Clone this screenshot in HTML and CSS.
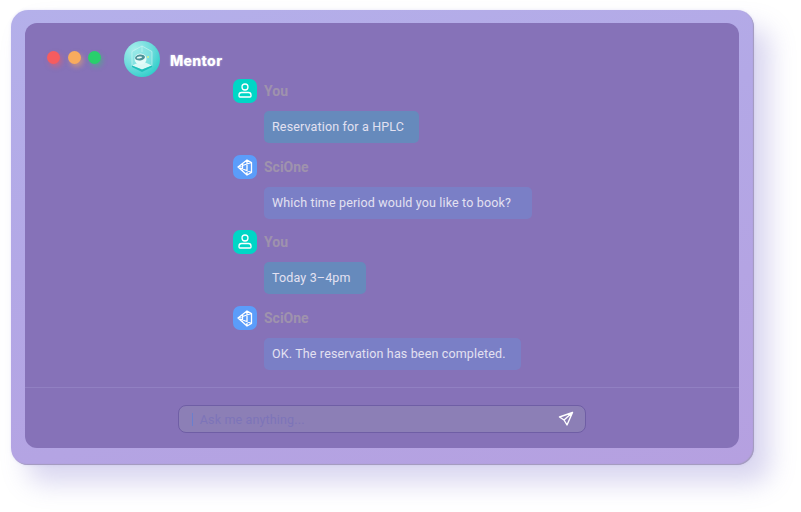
FILE: index.html
```html
<!DOCTYPE html>
<html lang="en">
<head>
  <meta charset="UTF-8">
  <meta name="viewport" content="width=device-width, initial-scale=1.0">
  <title>Mentor</title>
  <link rel="stylesheet" href="styles.css">
</head>
<body>
  <div class="frame">
    <main class="window">
      <header class="top">
        <div class="dots">
          <span class="dot red"></span>
          <span class="dot orange"></span>
          <span class="dot green"></span>
        </div>
        <svg class="logo" viewBox="0 0 36 36" aria-hidden="true">
          <defs>
            <radialGradient id="logoBg" cx="30%" cy="25%" r="90%">
              <stop offset="0" stop-color="#a8eeec"/>
              <stop offset="0.55" stop-color="#6adbdb"/>
              <stop offset="1" stop-color="#22ccc6"/>
            </radialGradient>
          </defs>
          <circle cx="18" cy="18" r="18" fill="url(#logoBg)"/>
          <path d="M18 5l10 5.500v14L18 30 8 24.500v-14z" fill="#8de6e4" opacity="0.55"/>
          <path d="M18 5l10 5.500v14M18 5L8 10.500v14M18 5v6" fill="none" stroke="#d3f8f5" stroke-width="0.6"/>
          <path d="M8 24.500l10-4.500 10 4.500-10 4z" fill="#d9f9f5"/>
          <path d="M8 24.500l10 4 10-4v1.500L18 31 8 26z" fill="#1fc0ba"/>
          <ellipse cx="16.500" cy="18" rx="6" ry="5.500" fill="#e4fbf8"/>
          <ellipse cx="16" cy="16.500" rx="5" ry="3" fill="#4d9298" transform="rotate(-8 16 16.500)"/>
          <ellipse cx="15.500" cy="16.500" rx="2.800" ry="1" fill="#e8fcf9" transform="rotate(-8 15.500 16.500)"/>
          <circle cx="24" cy="16" r="1" fill="#d8f58a"/>
        </svg>
        <span class="brand">Mentor</span>
      </header>

      <section class="chat">
        <article class="msg">
          <div class="who">
            <span class="avatar user">
              <svg viewBox="0 0 24 24" aria-hidden="true">
                <circle cx="12" cy="8" r="3"/>
                <path d="M8.500 13.500h7a2.500 2.500 0 0 1 2.500 2.500v1a1 1 0 0 1-1 1H7a1 1 0 0 1-1-1v-1a2.500 2.500 0 0 1 2.500-2.500z"/>
              </svg>
            </span>
            <span class="name">You</span>
          </div>
          <p class="bubble mine">Reservation for a HPLC</p>
        </article>
        <article class="msg">
          <div class="who">
            <span class="avatar bot">
              <svg viewBox="0 0 24 24" aria-hidden="true">
                <path d="M5 12l9-7 4.500 2.500v10L14 20l-9-8zM14 5v15M5 12l13.500-4.500M5 12l13.500 5.500M9.500 8.500v7.500"/>
              </svg>
            </span>
            <span class="name">SciOne</span>
          </div>
          <p class="bubble wide">Which time period would you like to book?</p>
        </article>
        <article class="msg">
          <div class="who">
            <span class="avatar user">
              <svg viewBox="0 0 24 24" aria-hidden="true">
                <circle cx="12" cy="8" r="3"/>
                <path d="M8.500 13.500h7a2.500 2.500 0 0 1 2.500 2.500v1a1 1 0 0 1-1 1H7a1 1 0 0 1-1-1v-1a2.500 2.500 0 0 1 2.500-2.500z"/>
              </svg>
            </span>
            <span class="name">You</span>
          </div>
          <p class="bubble mine">Today 3–4pm</p>
        </article>
        <article class="msg">
          <div class="who">
            <span class="avatar bot">
              <svg viewBox="0 0 24 24" aria-hidden="true">
                <path d="M5 12l9-7 4.500 2.500v10L14 20l-9-8zM14 5v15M5 12l13.500-4.500M5 12l13.500 5.500M9.500 8.500v7.500"/>
              </svg>
            </span>
            <span class="name">SciOne</span>
          </div>
          <p class="bubble">OK. The reservation has been completed.</p>
        </article>
      </section>

      <footer class="bottom">
        <div class="ask">
          <span class="caret"></span>
          <span class="hint">Ask me anything...</span>
          <svg class="send" viewBox="0 0 16 16" aria-hidden="true">
            <path d="M14.500 1.500L1.500 6l4.500 3 3 5zM6 9l8.500-7.500"/>
          </svg>
        </div>
      </footer>
    </main>
  </div>
</body>
</html>
```

FILE: styles.css
```css
*, *::before, *::after { box-sizing: border-box; margin: 0; padding: 0; }
html, body { height: 100%; }
body { background: #fff; padding: 10px 47px 0 11px; font-family: Roboto, sans-serif; overflow: hidden; }

.frame {
  height: 455px;
  padding: 13px 15px 17px 13.500px;
  border-radius: 17px;
  background: linear-gradient(165deg, #b4b0ea 0%, #b3a8e6 40%, #b5a0e0 100%);
  box-shadow: inset -1px -1px 1px #a39cbd, 16px 18px 26px rgba(118, 108, 200, 0.28), 0 0 3px rgba(180, 175, 235, 0.3);
}
.window { height: 100%; border-radius: 12px; background: #8672b8; display: flex; flex-direction: column; }

.top { display: flex; align-items: center; height: 36px; margin: 18px 0 2px; padding-left: 22.500px; }
.dots { display: flex; gap: 7.500px; margin: -3px 23px 0 0; }
.dot { width: 13px; height: 13px; border-radius: 50%; }
.red { background: #f65c5f; box-shadow: 2px 3px 5px rgba(246, 92, 95, 0.5); }
.orange { background: #f8ab5e; box-shadow: 2px 3px 5px rgba(248, 171, 94, 0.5); }
.green { background: #29cf6c; box-shadow: 2px 3px 5px rgba(41, 207, 108, 0.4); }
.logo { width: 36px; height: 36px; margin-right: 10px; }
.brand { margin-top: 3px; color: #fff; font-family: Inter, sans-serif; font-weight: 800; font-size: 14px; letter-spacing: 0.35px; text-shadow: 0 0 2px rgba(235, 240, 255, 0.6); }

.chat { flex: 1; padding-left: 208.500px; display: flex; flex-direction: column; gap: 11.500px; }
.who { display: flex; align-items: center; gap: 7px; height: 24px; margin-bottom: 8px; }
.avatar { width: 24px; height: 24px; border-radius: 7px; display: flex; }
.avatar svg { width: 24px; height: 24px; fill: none; stroke: #fff; stroke-width: 1.300; stroke-linejoin: round; }
.user { background: #00d6c6; }
.bot { background: #5b9dfa; }
.name { color: #9f92ad; font-size: 14px; font-weight: 700; }
.bubble {
  width: fit-content;
  height: 32px;
  margin-left: 31px;
  padding: 0 15px 0 8px;
  border-radius: 5px;
  background: #7a7fc6;
  color: #e3e1f1;
  font-size: 12.500px;
  letter-spacing: 0.15px;
  line-height: 32px;
}
.mine { background: #668abc; }
.wide { padding-right: 21px; }

.bottom { height: 61px; border-top: 1px solid #9180c2; padding-top: 17px; display: flex; justify-content: center; align-items: flex-start; }
.ask {
  width: 408px;
  height: 28px;
  border: 1px solid #6f5ea5;
  border-radius: 8px;
  background: #8c7fb6;
  display: flex;
  align-items: center;
  padding: 0 11px 0 13px;
}
.caret { width: 1px; height: 13px; background: #6a7fce; margin-right: 7px; }
.hint { flex: 1; color: #7d74b9; font-size: 12.500px; letter-spacing: 0.15px; }
.send { width: 16px; height: 16px; fill: none; stroke: #fff; stroke-width: 1.400; stroke-linejoin: round; }
```
